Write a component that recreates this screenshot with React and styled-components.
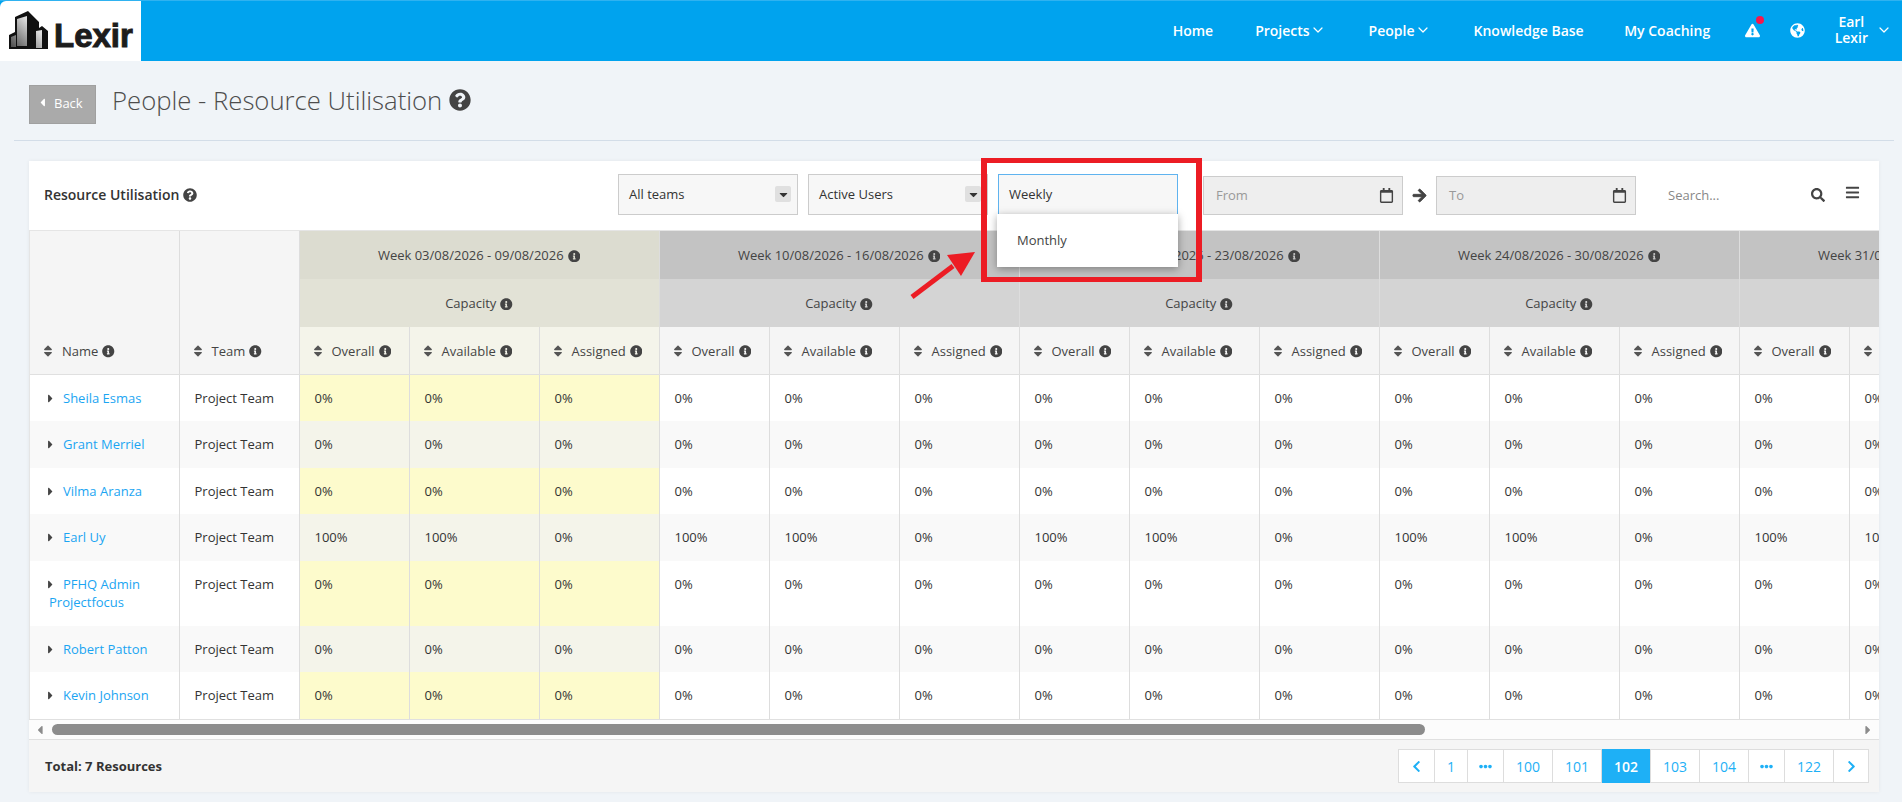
import React from "react";
import styled, { createGlobalStyle } from "styled-components";
import { ChevronDown } from "lucide-react";
import {
  FaArrowRight,
  FaBars,
  FaCaretDown,
  FaCaretLeft,
  FaCaretRight,
  FaChevronLeft,
  FaChevronRight,
  FaEllipsisH,
  FaExclamationTriangle,
  FaGlobeAmericas,
  FaInfoCircle,
  FaQuestionCircle,
  FaRegCalendar,
  FaSearch,
  FaSort,
} from "react-icons/fa";

const GlobalStyle = createGlobalStyle`
  * { box-sizing: border-box; }
  body {
    margin: 0;
    background: #f0f4f8;
    font-family: "Open Sans", "Liberation Sans", sans-serif;
    font-size: 13px;
    color: #333;
  }
`;

const Shell = styled.div`
  width: 1902px;
  height: 802px;
  overflow: hidden;
`;

const Header = styled.header`
  display: flex;
  align-items: center;
  height: 61px;
  background: #00a3ee;
  border-top: 1px solid #2fb2f0;
`;

const LogoBox = styled.div`
  display: flex;
  align-items: center;
  gap: 5px;
  width: 141px;
  height: 60px;
  padding-left: 9px;
  background: #fff;
  border-top-left-radius: 6px;
`;

const LogoText = styled.span`
  font-family: "Liberation Sans", sans-serif;
  font-size: 33px;
  font-weight: 700;
  line-height: 1;
  margin-top: 8px;
  color: #1c1c1c;
  -webkit-text-stroke: 1px #1c1c1c;
`;

const Nav = styled.nav`
  display: flex;
  align-items: center;
  margin: 0 0 2px auto;
  padding-right: 10px;
  color: #fff;
  font-size: 14px;
  font-weight: 600;
`;

const NavLink = styled.a`
  display: flex;
  align-items: center;
  padding: 0 ${(p) => p.$pad || 21}px;
  white-space: nowrap;
`;

const NavIcon = styled.span`
  position: relative;
  display: flex;
  padding: 0 15px;
  font-size: 15px;
`;

const AlertDot = styled.i`
  position: absolute;
  top: -7px;
  right: 11px;
  width: 8px;
  height: 8px;
  border-radius: 50%;
  background: #f5174d;
`;

const UserName = styled.div`
  display: flex;
  align-items: center;
  gap: 8px;
  margin-left: 15px;
  line-height: 16px;
  text-align: center;
`;

const Main = styled.main`
  padding: 24px 8px 0 14px;
`;

const PageHead = styled.div`
  display: flex;
  align-items: center;
  gap: 16px;
  height: 39px;
  padding-left: 15px;
`;

const BackButton = styled.button`
  display: flex;
  align-items: center;
  gap: 5px;
  width: 67px;
  height: 39px;
  padding: 0 0 4px 6px;
  background: #aaa;
  border: 1px solid #a0a0a0;
  color: #fff;
  font: inherit;
  font-size: 13px;
  svg { font-size: 13px; }
`;

const PageTitle = styled.h1`
  display: flex;
  align-items: center;
  gap: 7px;
  margin: 0 0 9px;
  font-size: 25.7px;
  font-weight: 300;
  color: #4d4d4d;
  svg { font-size: 22px; color: #444; }
`;

const Rule = styled.hr`
  height: 1px;
  margin: 16px 0 20px;
  border: 0;
  background: #d3dde8;
`;

const Card = styled.section`
  position: relative;
  margin: 0 15px;
  background: #fff;
  box-shadow: 0 0 4px rgba(0, 0, 0, 0.06);
`;

const Toolbar = styled.div`
  display: flex;
  align-items: flex-end;
  height: 69px;
  padding: 13px 19px 15px 15px;
`;

const ToolbarTitle = styled.h2`
  display: flex;
  flex: 1;
  align-items: center;
  gap: 4px;
  align-self: center;
  margin: 0;
  font-size: 14px;
  font-weight: 600;
  color: #333;
  svg { font-size: 14px; color: #444; }
`;

const SelectBox = styled.div`
  position: relative;
  display: flex;
  align-items: center;
  justify-content: space-between;
  width: 180px;
  height: 41px;
  margin-right: ${(p) => p.$gap}px;
  padding: 0 6px 1px 10px;
  background: #f7f7f7;
  border: 1px solid ${(p) => (p.$open ? "#5fb3ef" : "#ccc")};
  border-bottom-color: #ccc;
`;

const SelectCaret = styled.span`
  display: flex;
  align-items: center;
  justify-content: center;
  width: 16px;
  height: 16px;
  border-radius: 2px;
  background: #e0e0e0;
  font-size: 13px;
  color: #333;
`;

const Menu = styled.div`
  position: absolute;
  top: 100%;
  left: -2px;
  z-index: 3;
  width: 181px;
  height: 53px;
  padding: 17px 20px;
  background: #fff;
  color: #444;
  box-shadow: 0 2px 8px rgba(0, 0, 0, 0.35);
`;

const DateField = styled.div`
  display: flex;
  align-items: center;
  justify-content: space-between;
  width: 200px;
  height: 39px;
  padding: 0 8px 1px 12px;
  background: #eee;
  border: 1px solid #ccc;
  color: #999;
  svg { font-size: 15px; color: #444; }
`;

const DateArrow = styled.span`
  display: flex;
  align-items: center;
  justify-content: center;
  width: 33px;
  height: 39px;
  font-size: 15px;
  color: #444;
  svg { stroke: #444; stroke-width: 30px; }
`;

const SearchField = styled.div`
  display: flex;
  align-items: center;
  justify-content: space-between;
  width: 169px;
  height: 39px;
  margin-left: 20px;
  padding: 0 0 1px 12px;
  color: #888;
  svg { font-size: 14px; color: #444; }
`;

const MenuToggle = styled.span`
  display: flex;
  align-self: center;
  margin: 0 0 4px 20px;
  font-size: 15px;
  color: #444;
`;

const TableClip = styled.div`
  overflow: hidden;
  border-top: 1px solid #e5e5e5;
  border-left: 1px solid #e5e5e5;
`;

const Table = styled.table`
  width: 2069px;
  table-layout: fixed;
  border-collapse: collapse;
`;

const Col = styled.col`
  width: ${(p) => p.$w}px;
`;

const headCell = styled.th`
  padding: 0;
  font-weight: 500;
  color: #444;
  border-right: 1px solid #ddd;
  white-space: nowrap;
  svg { vertical-align: -2px; }
`;

const GroupCell = styled(headCell)`
  height: ${(p) => p.$h}px;
  text-align: center;
  background: ${(p) => p.$bg};
`;

const InfoMark = styled(FaInfoCircle)`
  margin-left: 4px;
  font-size: 12.5px;
  color: #444;
`;

const SortCell = styled(headCell)`
  height: 47px;
  padding: 0 0 14px 11px;
  text-align: left;
  vertical-align: bottom;
  background: ${(p) => (p.$current ? "#f4f4ea" : "#f5f5f5")};
  border-bottom: 1px solid #e0e0e0;
`;

const SortMark = styled(FaSort)`
  margin-right: 7px;
  font-size: 14px;
  color: #555;
`;

const Cell = styled.td`
  padding: 14px 15px;
  vertical-align: top;
  line-height: 1.42857;
  color: #333;
  border-right: 1px solid #ddd;
  overflow: hidden;
  white-space: nowrap;
  background: ${(p) => {
    if (p.$current) return p.$even ? "#f4f4ea" : "#fdfbcc";
    return p.$even ? "#f9f9f9" : "#fff";
  }};
`;

const NameCell = styled(Cell)`
  padding-left: 19px;
  white-space: normal;
`;

const PersonLink = styled.a`
  color: #1ba5f2;
  svg {
    margin: 0 6px 0 -5px;
    vertical-align: -2px;
    font-size: 13px;
    color: #444;
  }
`;

const ScrollTrack = styled.div`
  display: flex;
  align-items: center;
  height: 21px;
  padding: 0 4px;
  background: #fcfcfc;
  border-top: 1px solid #e0e0e0;
  border-bottom: 1px solid #e0e0e0;
  color: #8c8c8c;
  font-size: 14px;
`;

const ScrollThumb = styled.div`
  width: 1373px;
  height: 11px;
  margin: 0 auto 0 5px;
  border-radius: 6px;
  background: #8c8c8c;
`;

const Footer = styled.footer`
  display: flex;
  align-items: center;
  justify-content: space-between;
  height: 52px;
  padding: 0 10px 0 16px;
  background: #f5f5f5;
`;

const Total = styled.strong`
  font-weight: 700;
  color: #333;
`;

const Pager = styled.div`
  display: flex;
  height: 34px;
  background: #fff;
  border: 1px solid #ddd;
  color: #1eb0f6;
  font-size: 14px;
`;

const PageItem = styled.a`
  display: flex;
  align-items: center;
  justify-content: center;
  padding: 0 ${(p) => (p.$icon ? 0 : 12)}px;
  width: ${(p) => (p.$icon ? `${p.$icon}px` : "auto")};
  margin: ${(p) => (p.$active ? "-1px 0" : "0")};
  border-right: ${(p) => (p.$last ? "0" : "1px solid #ddd")};
  background: ${(p) => (p.$active ? "#1eb0f6" : "transparent")};
  color: ${(p) => (p.$active ? "#fff" : "inherit")};
  font-weight: ${(p) => (p.$active ? 600 : 400)};
  svg { font-size: 13px; }
`;

const RedFrame = styled.div`
  position: absolute;
  top: -3px;
  left: 952px;
  z-index: 4;
  width: 221px;
  height: 124px;
  border: 5px solid #ec1c24;
  border-left-width: 6px;
  border-right-width: 6px;
  pointer-events: none;
`;

const RedArrow = styled.svg`
  position: absolute;
  top: 88px;
  left: 880px;
  z-index: 4;
`;

const groups = [
  { label: "Week 03/08/2026 - 09/08/2026", top: "#dcdcd0", mid: "#e2e2d6", current: true },
  { label: "Week 10/08/2026 - 16/08/2026", top: "#c3c3c3", mid: "#d4d4d4" },
  { label: "Week 17/08/2026 - 23/08/2026", top: "#c3c3c3", mid: "#d4d4d4" },
  { label: "Week 24/08/2026 - 30/08/2026", top: "#c3c3c3", mid: "#d4d4d4" },
  { label: "Week 31/08/2026 - 06/09/2026", top: "#c3c3c3", mid: "#d4d4d4" },
];

const people = [
  { name: "Sheila Esmas", value: "0%" },
  { name: "Grant Merriel", value: "0%" },
  { name: "Vilma Aranza", value: "0%" },
  { name: "Earl Uy", value: "100%" },
  { name: "PFHQ Admin Projectfocus", value: "0%" },
  { name: "Robert Patton", value: "0%" },
  { name: "Kevin Johnson", value: "0%" },
];

const measures = ["Overall", "Available", "Assigned"];
const pages = ["1", "dots", "100", "101", "102", "103", "104", "dots", "122"];

function BuildingsLogo() {
  return (
    <svg width="40" height="40" viewBox="0 0 40 40">
      <defs>
        <linearGradient id="glass" x1="0" y1="1" x2="1" y2="0">
          <stop offset="0" stopColor="#4a4a4a" />
          <stop offset="0.7" stopColor="#ddd" />
          <stop offset="1" stopColor="#fff" />
        </linearGradient>
      </defs>
      <path d="M0 38V24l6-3V6L19 0l11 11v6l3-2 6 5v18z" fill="#111" />
      <path d="M2 36V26l5-2v12zM8 35V8l10-3v30zM27 37V20l6-1v18z" fill="url(#glass)" />
    </svg>
  );
}

function Select({ children, gap }) {
  return (
    <SelectBox $gap={gap}>
      {children}
      <SelectCaret>
        <FaCaretDown />
      </SelectCaret>
    </SelectBox>
  );
}

export default function App() {
  return (
    <Shell>
      <GlobalStyle />
      <Header>
        <LogoBox>
          <BuildingsLogo />
          <LogoText>Lexir</LogoText>
        </LogoBox>
        <Nav>
          <NavLink>Home</NavLink>
          <NavLink>
            Projects <ChevronDown size={16} strokeWidth={1.8} />
          </NavLink>
          <NavLink $pad={22}>
            People <ChevronDown size={16} strokeWidth={1.8} />
          </NavLink>
          <NavLink>Knowledge Base</NavLink>
          <NavLink $pad={19.5}>My Coaching</NavLink>
          <NavIcon>
            <FaExclamationTriangle />
            <AlertDot />
          </NavIcon>
          <NavIcon>
            <FaGlobeAmericas />
          </NavIcon>
          <UserName>
            <span>
              Earl
              <br />
              Lexir
            </span>
            <ChevronDown size={16} strokeWidth={1.8} />
          </UserName>
        </Nav>
      </Header>
      <Main>
        <PageHead>
          <BackButton>
            <FaCaretLeft /> Back
          </BackButton>
          <PageTitle>
            People - Resource Utilisation <FaQuestionCircle />
          </PageTitle>
        </PageHead>
        <Rule />
        <Card>
          <Toolbar>
            <ToolbarTitle>
              Resource Utilisation <FaQuestionCircle />
            </ToolbarTitle>
            <Select gap={10}>All teams</Select>
            <Select gap={10}>Active Users</Select>
            <SelectBox $open $gap={25}>
              Weekly
              <Menu>Monthly</Menu>
            </SelectBox>
            <DateField>
              From <FaRegCalendar />
            </DateField>
            <DateArrow>
              <FaArrowRight />
            </DateArrow>
            <DateField>
              To <FaRegCalendar />
            </DateField>
            <SearchField>
              Search... <FaSearch />
            </SearchField>
            <MenuToggle>
              <FaBars />
            </MenuToggle>
          </Toolbar>
          <TableClip>
            <Table>
              <colgroup>
                <Col $w={149} />
                <Col $w={120} />
                {groups.map((g) =>
                  [110, 130, 120].map((w) => <Col key={g.label + w} $w={w} />)
                )}
              </colgroup>
              <thead>
                <tr>
                  <SortCell rowSpan={3}>
                    <SortMark />
                    Name
                    <InfoMark />
                  </SortCell>
                  <SortCell rowSpan={3}>
                    <SortMark />
                    Team
                    <InfoMark />
                  </SortCell>
                  {groups.map((g) => (
                    <GroupCell key={g.label} colSpan={3} $h={48} $bg={g.top}>
                      {g.label}
                      <InfoMark />
                    </GroupCell>
                  ))}
                </tr>
                <tr>
                  {groups.map((g) => (
                    <GroupCell key={g.label} colSpan={3} $h={48} $bg={g.mid}>
                      Capacity
                      <InfoMark />
                    </GroupCell>
                  ))}
                </tr>
                <tr>
                  {groups.map((g) =>
                    measures.map((m) => (
                      <SortCell key={g.label + m} $current={g.current}>
                        <SortMark />
                        {m}
                        <InfoMark />
                      </SortCell>
                    ))
                  )}
                </tr>
              </thead>
              <tbody>
                {people.map((person, i) => (
                  <tr key={person.name}>
                    <NameCell $even={i % 2 === 1}>
                      <PersonLink>
                        <FaCaretRight />
                        {person.name}
                      </PersonLink>
                    </NameCell>
                    <Cell $even={i % 2 === 1}>Project Team</Cell>
                    {groups.map((g) =>
                      measures.map((m) => (
                        <Cell key={g.label + m} $even={i % 2 === 1} $current={g.current}>
                          {m === "Assigned" ? "0%" : person.value}
                        </Cell>
                      ))
                    )}
                  </tr>
                ))}
              </tbody>
            </Table>
          </TableClip>
          <ScrollTrack>
            <FaCaretLeft />
            <ScrollThumb />
            <FaCaretRight />
          </ScrollTrack>
          <Footer>
            <Total>Total: 7 Resources</Total>
            <Pager>
              <PageItem $icon={36}>
                <FaChevronLeft />
              </PageItem>
              {pages.map((p, i) =>
                p === "dots" ? (
                  <PageItem key={i} $icon={36}>
                    <FaEllipsisH />
                  </PageItem>
                ) : (
                  <PageItem key={i} $active={p === "102"}>
                    {p}
                  </PageItem>
                )
              )}
              <PageItem $icon={34} $last>
                <FaChevronRight />
              </PageItem>
            </Pager>
          </Footer>
          <RedFrame />
          <RedArrow width="70" height="52" viewBox="0 0 70 52">
            <path d="M3 48 L44 17" stroke="#ec1c24" strokeWidth="5" />
            <path d="M66 3 L38 6 L52 27 Z" fill="#ec1c24" />
          </RedArrow>
        </Card>
      </Main>
    </Shell>
  );
}
